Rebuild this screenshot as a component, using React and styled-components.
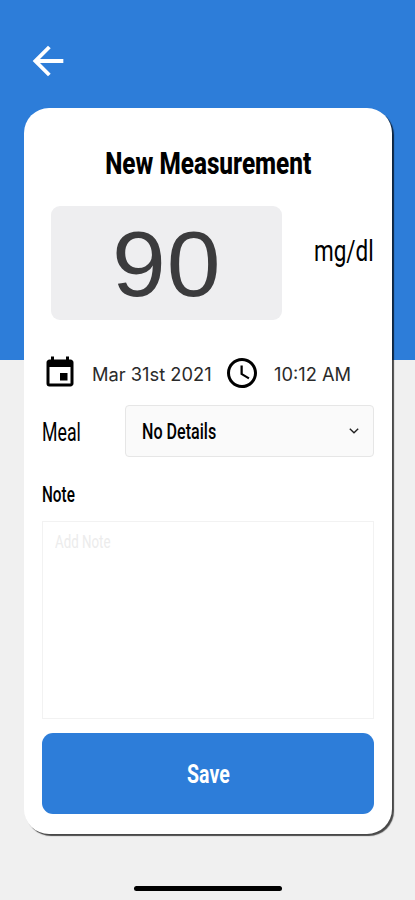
import styled, { createGlobalStyle } from 'styled-components';
import { MdArrowBack, MdEvent, MdAccessTime } from 'react-icons/md';

const App = () => {
  return (
    <>
      <Reset />
      <StyledScreen>
        <StyledHeader>
          <StyledBack aria-label="Back">
            <MdArrowBack />
          </StyledBack>
        </StyledHeader>
        <StyledCard>
          <StyledTitle>
            <StyledNarrow $scale={0.785}>New Measurement</StyledNarrow>
          </StyledTitle>
          <StyledValueRow>
            <StyledValue>
              <StyledNarrow $scale={1.04}>90</StyledNarrow>
            </StyledValue>
            <StyledUnit>
              <StyledNarrow $scale={0.75} $origin="right">
                mg/dl
              </StyledNarrow>
            </StyledUnit>
          </StyledValueRow>
          <StyledDateRow>
            <MdEvent />
            <StyledDate>Mar 31st 2021</StyledDate>
            <MdAccessTime />
            <StyledTime>10:12 AM</StyledTime>
          </StyledDateRow>
          <StyledMealRow>
            <StyledLabel $size={25}>
              <StyledNarrow $scale={0.71} $origin="left">
                Meal
              </StyledNarrow>
            </StyledLabel>
            <StyledSelect>
              <StyledNarrow $scale={0.715} $origin="left">
                No Details
              </StyledNarrow>
              <StyledChevron viewBox="0 0 10 6">
                <path d="M0.8 0.8 5 4.8 9.2 0.8" />
              </StyledChevron>
            </StyledSelect>
          </StyledMealRow>
          <StyledNoteLabel $size={22.5} $weight={500}>
            <StyledNarrow $scale={0.68} $origin="left">
              Note
            </StyledNarrow>
          </StyledNoteLabel>
          <StyledNote>
            <StyledNarrow $scale={0.72} $origin="left">
              Add Note
            </StyledNarrow>
          </StyledNote>
          <StyledSave>
            <StyledNarrow $scale={0.75}>Save</StyledNarrow>
          </StyledSave>
        </StyledCard>
        <StyledHomeBar />
      </StyledScreen>
    </>
  );
};

export default App;

const Reset = createGlobalStyle`
  * {
    box-sizing: border-box;
    margin: 0;
    padding: 0;
  }
  body {
    background-color: #f0f0f0;
    font-family: Roboto, 'Liberation Sans', sans-serif;
    color: #000;
  }
  button {
    border: none;
    background: none;
    font-family: inherit;
  }
`;

const StyledScreen = styled.div`
  display: flex;
  flex-direction: column;
  height: 900px;
  width: 415px;
  overflow: hidden;
  background: linear-gradient(#2d7dd9 360px, #f0f0f0 360px);
`;

const StyledHeader = styled.div`
  height: 108px;
  padding: 38px 0 0 25px;
`;

const StyledBack = styled.button`
  display: flex;
  font-size: 46px;
  color: #fff;
`;

const StyledCard = styled.div`
  display: flex;
  flex-direction: column;
  width: 368px;
  height: 726px;
  margin-left: 24px;
  padding: 0 18px;
  border-radius: 25px;
  background-color: #fff;
  box-shadow: 2px 2px 1px rgba(0, 0, 0, 0.7);
`;

/* squeezes the regular face into a tall condensed one */
const StyledNarrow = styled.span`
  display: inline-block;
  white-space: nowrap;
  transform: scaleX(${({ $scale }) => $scale});
  transform-origin: ${({ $origin }) => $origin || 'center'};
`;

const StyledTitle = styled.h1`
  display: flex;
  justify-content: center;
  padding-top: 37px;
  height: 98px;
  font-size: 31px;
  line-height: 38px;
  font-weight: 800;
`;

const StyledValueRow = styled.div`
  display: flex;
  justify-content: space-between;
  padding-left: 9px;
`;

const StyledValue = styled.div`
  width: 231px;
  height: 114px;
  border-radius: 9px;
  background-color: #eeeef0;
  color: #3b3b3d;
  font-family: 'Liberation Sans', sans-serif;
  font-size: 93px;
  line-height: 116px;
  letter-spacing: 1px;
  text-align: center;
`;

const StyledUnit = styled.div`
  display: flex;
  justify-content: flex-end;
  width: 80px;
  padding-top: 26px;
  font-size: 30px;
  line-height: 38px;
`;

const StyledDateRow = styled.div`
  display: flex;
  align-items: center;
  height: 40px;
  margin-top: 33px;
  font-family: Inter, sans-serif;
  font-size: 18.3px;
  color: #2a2a2a;

  svg {
    flex: none;
    width: 36px;
    height: 36px;
    color: #000;
  }
`;

const StyledDate = styled.span`
  width: 146px;
  padding: 2px 0 0 14px;
  white-space: nowrap;
`;

const StyledTime = styled.span`
  padding: 2px 0 0 14px;
  white-space: nowrap;
`;

const StyledMealRow = styled.div`
  display: flex;
  align-items: center;
  margin-top: 12px;
`;

const StyledLabel = styled.div`
  width: 83px;
  padding-top: 2px;
  font-size: ${({ $size }) => $size}px;
  font-weight: ${({ $weight }) => $weight || 400};
`;

const StyledSelect = styled.div`
  display: flex;
  align-items: center;
  justify-content: space-between;
  width: 249px;
  height: 52px;
  padding: 0 14px 0 16px;
  border: 1px solid #e6e6e6;
  border-radius: 4px;
  background-color: #fafafa;
  font-size: 22.5px;
  font-weight: 500;
`;

const StyledChevron = styled.svg`
  width: 10px;
  height: 6px;
  margin-bottom: 1px;
  fill: none;
  stroke: #222;
  stroke-width: 1.4;
`;

const StyledNoteLabel = styled(StyledLabel)`
  height: 64px;
  padding-top: 18px;
  line-height: 38px;
`;

const StyledNote = styled.div`
  height: 198px;
  padding: 8px 12px;
  border: 1px solid #f2f2f2;
  font-size: 18.5px;
  line-height: 24px;
  color: #ececec;
`;

const StyledSave = styled.button`
  height: 81px;
  margin-top: 14px;
  border-radius: 11px;
  background-color: #2d7dd9;
  color: #fff;
  font-size: 26px;
  font-weight: 700;
`;

const StyledHomeBar = styled.div`
  width: 148px;
  height: 5px;
  margin: 52px 0 0 134px;
  border-radius: 3px;
  background-color: #000;
`;
